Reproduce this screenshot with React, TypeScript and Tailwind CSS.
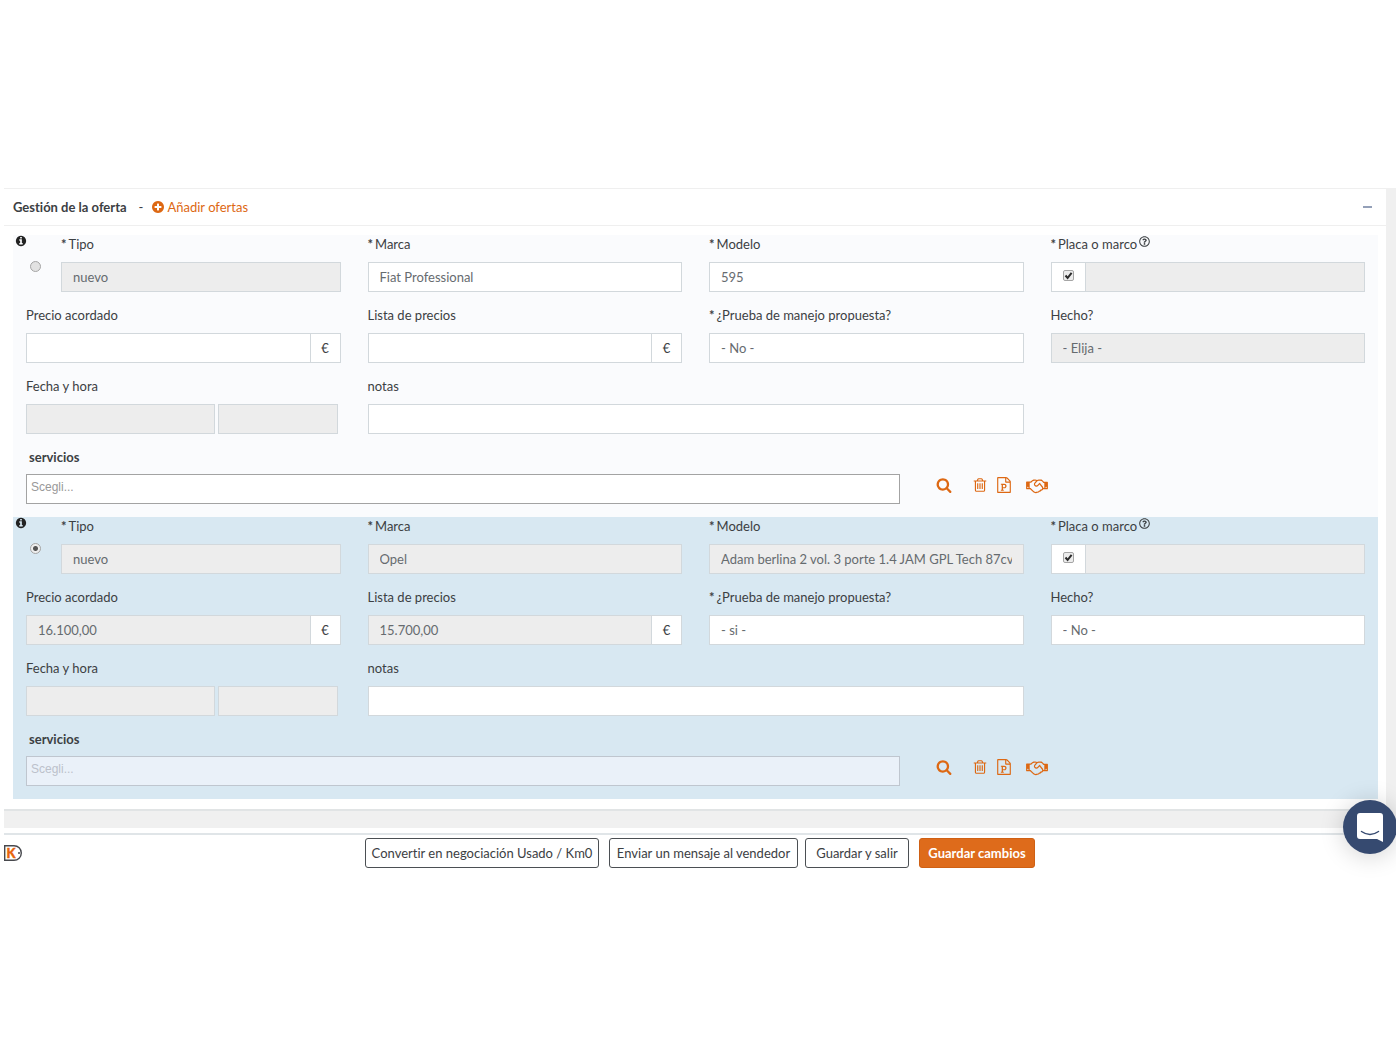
import type { ReactNode } from 'react';
import { FaRegQuestionCircle } from 'react-icons/fa';

const CIRCLE =
  'm512 0q0 209-103 385.5t-279.5 279.5-385.5 103-385.5-103-279.5-279.5-103-385.5 103-385.5 279.5-279.5 385.5-103 385.5 103 279.5 279.5 103 385.5z';

const PATHS = {
  plus:
    'M1344 960v-128q0-26-19-45t-45-19h-256v-256q0-26-19-45t-45-19h-128q-26 0-45 19t-19 45v256h-256q-26 0-45 19t-19 45v128q0 26 19 45t45 19h256v256q0 26 19 45t45 19h128q26 0 45-19t19-45v-256h256q26 0 45-19t19-45zM1152 896' +
    CIRCLE,
  info:
    'M1152 1376v-160q0-14-9-23t-23-9h-96v-512q0-14-9-23t-23-9h-320q-14 0-23 9t-9 23v160q0 14 9 23t23 9h96v320h-96q-14 0-23 9t-9 23v160q0 14 9 23t23 9h448q14 0 23-9t9-23zm-128-896v-160q0-14-9-23t-23-9h-192q-14 0-23 9t-9 23v160q0 14 9 23t23 9h192q14 0 23-9t9-23zM1152 896' +
    CIRCLE,
  search:
    'M1216 832q0-185-131.5-316.5t-316.5-131.5-316.5 131.5-131.5 316.5 131.5 316.5 316.5 131.5 316.5-131.5 131.5-316.5zm512 832q0 52-38 90t-90 38q-54 0-90-38l-343-342q-179 124-399 124-143 0-273.5-55.5t-225-150-150-225-55.5-273.5 55.5-273.5 150-225 225-150 273.5-55.5 273.5 55.5 225 150 150 225 55.5 273.5q0 220-124 399l343 343q37 37 37 90z',
  trash:
    'M704 736v576q0 14-9 23t-23 9h-64q-14 0-23-9t-9-23v-576q0-14 9-23t23-9h64q14 0 23 9t9 23zm256 0v576q0 14-9 23t-23 9h-64q-14 0-23-9t-9-23v-576q0-14 9-23t23-9h64q14 0 23 9t9 23zm256 0v576q0 14-9 23t-23 9h-64q-14 0-23-9t-9-23v-576q0-14 9-23t23-9h64q14 0 23 9t9 23zm128 724v-948h-896v948q0 22 7 40.5t14.5 27 10.5 8.5h832q3 0 10.5-8.5t14.5-27 7-40.5zm-672-1076h448l-48-117q-7-9-17-11h-317q-10 2-17 11zm928 32v64q0 14-9 23t-23 9h-96v948q0 83-47 143.5t-113 60.5h-832q-66 0-113-58.5t-47-141.5v-952h-96q-14 0-23-9t-9-23v-64q0-14 9-23t23-9h309l70-167q15-37 54-63t79-26h320q40 0 79 26t54 63l70 167h309q14 0 23 9t9 23z',
  file:
    'M1596 380q28 28 48 76t20 88v1152q0 40-28 68t-68 28h-1344q-40 0-68-28t-28-68v-1600q0-40 28-68t68-28h896q40 0 88 20t76 48zm-444-244v376h376q-10-29-22-41l-313-313q-12-12-41-22zm384 1528v-1024h-416q-40 0-68-28t-28-68v-416h-768v1536h1280zm-992-234v106h327v-106h-93v-167h137q76 0 118-15 67-23 106.5-87t39.5-146q0-81-37-141t-100-87q-48-19-130-19h-368v107h92v555h-92zm353-280h-119v-268h120q52 0 83 18 56 33 56 115 0 89-62 120-31 15-78 15z',
};

const HANDSHAKE =
  'M192 1152q40 0 56-32t0-64-56-32-56 32 0 64 56 32zm1473-58q-10-13-38.5-50t-41.5-54-38-49-42.5-53-40.5-47-45-49l-125 140q-83 94-208.5 92t-205.5-98q-57-69-56.5-158t58.5-157l177-206q-22-11-51-16.5t-47.5-6-56.5.5-49 1q-92 0-158 66l-158 158h-155v544q5 0 21-.5t22 0 19.5 2 20.5 4.500 17.5 8.500 18.5 13.500l297 292q115 111 227 111 78 0 125-47 57 20 112.5-8t72.5-85q74 6 127-44 20-18 36-45.5t14-50.5q10 10 43 10 43 0 77-21t49.5-53 12-71.5-30.5-73.5zm159 58h96v-512h-93l-157-180q-66-76-169-76h-167q-89 0-146 67l-209 243q-28 33-28 75t27 75q43 51 110 52t111-49l193-218q25-23 53.5-21.5t47 27 8.5 56.5q16 19 56 63t60 68q29 36 82.5 105.5t64.5 84.5q52 66 60 140zm288 0q40 0 56-32t0-64-56-32-56 32 0 64 56 32zm192-576v640q0 26-19 45t-45 19h-434q-27 65-82 106.5t-125 51.5q-33 48-80.5 81.5t-102.5 45.5q-42 53-104.5 81.5t-128.5 24.5q-60 34-126 39.5t-127.5-14-117-53.5-103.5-81l-287-282h-358q-26 0-45-19t-19-45v-672q0-26 19-45t45-19h421q14-14 47-48t47.5-48 44-40 50.5-37.5 51-25.5 62-19.5 68-5.5h117q99 0 181 56 82-56 181-56h167q35 0 67 6t56.5 14.5 51.5 26.5 44.5 31 43 39.5 39 41 41 45.5 41.5 45h355q26 0 45 19t19 45z';

function Icon({ name, className }: { name: keyof typeof PATHS; className: string }) {
  return (
    <svg viewBox="0 0 1792 1792" fill="currentColor" aria-hidden="true" className={className}>
      <path d={PATHS[name]} />
    </svg>
  );
}

const BOX = 'block h-[30px] w-full min-w-0 appearance-none rounded-none border border-[#d2d8dc] px-[11px] text-[#666b6f] outline-none';
const tone = (off?: boolean) => (off ? 'bg-[#ededed]' : 'bg-white');

function Label({ id, required, children }: { id: string; required?: boolean; children: ReactNode }) {
  return (
    <label htmlFor={id} className="mb-[9px] flex h-[18px] items-center gap-[2px] whitespace-nowrap">
      {required && <span className="font-bold">*</span>}
      {children}
    </label>
  );
}

type FieldProps = { id: string; label: string; value?: string; off?: boolean; required?: boolean };

function SelectField({ id, label, value, off, required }: FieldProps) {
  return (
    <div className="min-w-0 flex-1">
      <Label id={id} required={required}>{label}</Label>
      <select id={id} disabled={off} className={`${BOX} ${tone(off)} opacity-100`}>
        <option>{value}</option>
      </select>
    </div>
  );
}

function TextField({ id, label, value, off, required }: FieldProps) {
  return (
    <div className="min-w-0">
      <Label id={id} required={required}>{label}</Label>
      <input id={id} type="text" defaultValue={value} readOnly={off} className={`${BOX} ${tone(off)}`} />
    </div>
  );
}

function PriceField({ id, label, value, off }: FieldProps) {
  return (
    <div className="min-w-0">
      <Label id={id}>{label}</Label>
      <div className="flex">
        <input id={id} type="text" defaultValue={value} readOnly={off} className={`${BOX} ${tone(off)}`} />
        <span className="flex h-[30px] w-[30px] shrink-0 items-center justify-center border border-l-0 border-[#d2d8dc] bg-white">
          €
        </span>
      </div>
    </div>
  );
}

type Offer = {
  id: string;
  selected: boolean;
  marca: string;
  modelo: string;
  acordado: string;
  lista: string;
  prueba: string;
  hecho: string;
  hechoOff: boolean;
};

function OfferBlock({ o }: { o: Offer }) {
  const locked = o.selected;
  return (
    <section className={`relative pb-3 ${locked ? 'bg-[#d8e8f2]' : 'bg-[#fafbfd]'}`}>
      <Icon name="info" className="absolute top-0 left-[2px] size-3 text-[#222]" />
      <div className="grid grid-cols-4 gap-x-[27px] gap-y-[14px] px-[13px]">
        <div className="flex">
          <input
            type="radio"
            name="oferta"
            defaultChecked={o.selected}
            aria-label="Seleccionar oferta"
            className="mt-[26px] mr-5 ml-1 size-[11px] shrink-0 appearance-none rounded-full border border-[#a5a5a5] bg-[#e2e2e2] checked:bg-[radial-gradient(circle,#555_2px,#eee_3px)]"
          />
          <SelectField id={`${o.id}-tipo`} label="Tipo" value="nuevo" off required />
        </div>
        <SelectField id={`${o.id}-marca`} label="Marca" value={o.marca} off={locked} required />
        <TextField id={`${o.id}-modelo`} label="Modelo" value={o.modelo} off={locked} required />
        <div className="min-w-0">
          <Label id={`${o.id}-placa`} required>
            Placa o marco
            <FaRegQuestionCircle className="mb-[5px] size-[11px]" />
          </Label>
          <div className="flex">
            <span className="flex h-[30px] w-[34px] shrink-0 justify-center border border-r-0 border-[#d2d8dc] bg-white pt-[7px]">
              <span className="relative size-[11px]">
                <input
                  type="checkbox"
                  defaultChecked
                  aria-label="Placa disponible"
                  className="peer block size-[11px] appearance-none rounded-[2px] border border-[#a5a5a5] bg-[#ececec]"
                />
                <svg viewBox="0 0 11 11" className="pointer-events-none absolute inset-0 hidden size-[11px] peer-checked:block" aria-hidden="true">
                  <path d="M2.5 5.5 4.6 8 8.6 2.8" fill="none" stroke="#2b2b2b" strokeWidth="2" />
                </svg>
              </span>
            </span>
            <input id={`${o.id}-placa`} type="text" readOnly className={`${BOX} ${tone(true)}`} />
          </div>
        </div>

        <PriceField id={`${o.id}-acordado`} label="Precio acordado" value={o.acordado} off={locked} />
        <PriceField id={`${o.id}-lista`} label="Lista de precios" value={o.lista} off={locked} />
        <SelectField id={`${o.id}-prueba`} label="¿Prueba de manejo propuesta?" value={o.prueba} required />
        <SelectField id={`${o.id}-hecho`} label="Hecho?" value={o.hecho} off={o.hechoOff} />

        <div className="min-w-0">
          <Label id={`${o.id}-fecha`}>Fecha y hora</Label>
          <div className="grid grid-cols-[189fr_119fr] gap-[3px] pr-[3px]">
            <input id={`${o.id}-fecha`} type="text" readOnly className={`${BOX} ${tone(true)}`} />
            <input aria-label="Hora" type="text" readOnly className={`${BOX} ${tone(true)}`} />
          </div>
        </div>
        <div className="col-span-2">
          <TextField id={`${o.id}-notas`} label="notas" />
        </div>

        <div className="col-span-4">
          <label htmlFor={`${o.id}-servicios`} className="mb-2 ml-[3px] flex h-[18px] items-center font-bold">
            servicios
          </label>
          <div className="flex pb-px">
            <input
              id={`${o.id}-servicios`}
              type="text"
              placeholder="Scegli..."
              className={`h-[30px] w-[65.3%] border px-1 pb-1 font-['Liberation_Sans',Arial,sans-serif] text-[12px] outline-none ${
                locked
                  ? 'border-[#bfc6cf] bg-[#eaf1f9] placeholder:text-[#bcc1cb]'
                  : 'border-[#a3a3a3] bg-white placeholder:text-[#999]'
              }`}
            />
            <div className="flex h-[22px] items-center text-[#dd6813]">
              <button type="button" aria-label="Buscar" className="ml-9">
                <Icon name="search" className="size-4" />
              </button>
              <button type="button" aria-label="Eliminar" className="ml-5">
                <Icon name="trash" className="size-4" />
              </button>
              <button type="button" aria-label="Presupuesto" className="ml-2">
                <Icon name="file" className="size-4" />
              </button>
              <button type="button" aria-label="Negociar" className="ml-[14px]">
                <svg viewBox="0 0 2304 1792" fill="currentColor" aria-hidden="true" className="h-[17px] w-[22px]">
                  <path d={HANDSHAKE} />
                </svg>
              </button>
            </div>
          </div>
        </div>
      </div>
    </section>
  );
}

const OFFERS: Offer[] = [
  { id: 'o1', selected: false, marca: 'Fiat Professional', modelo: '595', acordado: '', lista: '', prueba: '- No -', hecho: '- Elija -', hechoOff: true },
  { id: 'o2', selected: true, marca: 'Opel', modelo: 'Adam berlina 2 vol. 3 porte 1.4 JAM GPL Tech 87cv MT', acordado: '16.100,00', lista: '15.700,00', prueba: '- si -', hecho: '- No -', hechoOff: false },
];

const BTN = 'h-[30px] rounded-[3px] border whitespace-nowrap';

export default function App() {
  return (
    <div className="relative min-h-screen overflow-hidden bg-white pt-[188px] pl-1 font-[Lato,sans-serif] text-[13px] leading-[18px] text-[#3c4043] [font-variant-ligatures:none]">
      <main className="bg-[#f0f0f0] pr-[10px] pb-[17px]">
        <div className="border-t border-b-2 border-t-[#efefef] border-b-[#e1e4e5] bg-white">
          <header className="flex h-[37px] items-center border-b border-[#efefef] pr-[14px] pl-[9px]">
            <h2 className="font-bold">Gestión de la oferta</h2>
            <span className="mr-2 ml-3">-</span>
            <a href="#nueva" className="flex items-center gap-[2px] text-[#dd6813]">
              <Icon name="plus" className="size-[14px]" />
              Añadir ofertas
            </a>
            <button type="button" aria-label="Contraer" className="ml-auto flex h-5 items-center">
              <span className="block h-[2px] w-[9px] bg-[#94a0b8]" />
            </button>
          </header>
          <div className="pt-[9px] pr-2 pb-[10px] pl-[9px]">
            {OFFERS.map((o) => (
              <OfferBlock key={o.id} o={o} />
            ))}
          </div>
        </div>
      </main>

      <footer className="relative mt-[5px] border-t-2 border-[#e0e5e8] pt-[3px]">
        <div className="grid grid-cols-[1fr_auto_1fr] items-center">
          <svg viewBox="0 0 18 16" className="h-4 w-[18px]" role="img" aria-label="K">
            <path d="M.7.7H10a7.3 7.3 0 0 1 0 14.6H.7z" fill="#fff" stroke="#47484d" strokeWidth="1.4" />
            <circle cx="15" cy="8" r="1" fill="#47484d" />
            <text x="2.500" y="12.500" fontSize="13" fontWeight="900" fontFamily="Lato, sans-serif" fill="#e8640c" stroke="#e8640c" strokeWidth=".4">K</text>
          </svg>
          <div className="flex">
            <button type="button" className={`${BTN} mr-[10px] w-[234px] border-[#4b4f53] bg-white`}>Convertir en negociación Usado / Km0</button>
            <button type="button" className={`${BTN} mr-[7px] w-[189px] border-[#4b4f53] bg-white`}>Enviar un mensaje al vendedor</button>
            <button type="button" className={`${BTN} mr-[10px] w-[104px] border-[#4b4f53] bg-white`}>Guardar y salir</button>
            <button type="button" className={`${BTN} w-[116px] border-[#cf6014] bg-[#de6b1b] font-bold text-white`}>Guardar cambios</button>
          </div>
        </div>
        <button
          type="button"
          aria-label="Abrir chat"
          className="absolute -top-[35px] -right-px flex size-[54px] items-center justify-center rounded-full bg-[#364a70] shadow-[0_2px_24px_rgba(0,0,0,0.18)]"
        >
          <svg viewBox="0 0 26 29" className="h-[29px] w-[26px]" aria-hidden="true">
            <path d="M3 0h20a3 3 0 0 1 3 3v26l-6-3H3a3 3 0 0 1-3-3V3a3 3 0 0 1 3-3z" fill="#fff" />
            <path d="M4.500 18.500q8.500 6 17 0" fill="none" stroke="#364a70" strokeWidth="1.500" strokeLinecap="round" />
          </svg>
        </button>
      </footer>
    </div>
  );
}
